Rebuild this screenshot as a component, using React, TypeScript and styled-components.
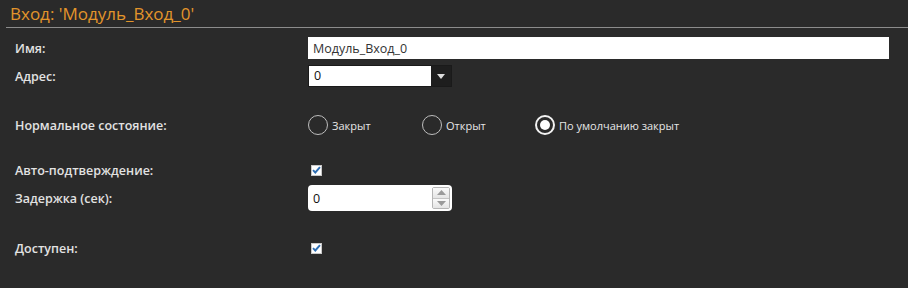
import React, { useState } from 'react';
import styled, { createGlobalStyle } from 'styled-components';

const GlobalStyle = createGlobalStyle`
  html, body {
    margin: 0;
    padding: 0;
    background: #2a2a2a;
  }
`;

const App: React.FC = () => {
  const [state, setState] = useState('default');
  const [autoAck, setAutoAck] = useState(true);
  const [enabled, setEnabled] = useState(true);

  return (
    <Page>
      <GlobalStyle />
      <Header>
        <Title>Вход: 'Модуль_Вход_0'</Title>
      </Header>
      <Form>
        <Row>
          <Label>Имя:</Label>
          <TextInput defaultValue="Модуль_Вход_0" />
        </Row>
        <Row>
          <Label>Адрес:</Label>
          <Select>
            <SelectValue>0</SelectValue>
            <SelectArrow>
              <svg width="8" height="5" viewBox="0 0 8 5">
                <path d="M0 0h8L4 5z" fill="#ddd" />
              </svg>
            </SelectArrow>
          </Select>
        </Row>
        <Row $gap={21}>
          <Label>Нормальное состояние:</Label>
          <RadioGroup>
            <RadioOption $width={114} onClick={() => setState('closed')}>
              <Radio $checked={state === 'closed'} />
              Закрыт
            </RadioOption>
            <RadioOption $width={113} onClick={() => setState('open')}>
              <Radio $checked={state === 'open'} />
              Открыт
            </RadioOption>
            <RadioOption onClick={() => setState('default')}>
              <Radio $checked={state === 'default'} />
              По умолчанию закрыт
            </RadioOption>
          </RadioGroup>
        </Row>
        <Row $gap={17}>
          <Label>Авто-подтверждение:</Label>
          <Check $checked={autoAck} onClick={() => setAutoAck(!autoAck)}>
            {autoAck && <CheckMark />}
          </Check>
        </Row>
        <Row>
          <Label>Задержка (сек):</Label>
          <NumberBox>
            <NumberValue>0</NumberValue>
            <Spinner>
              <SpinButton>
                <svg width="9" height="5" viewBox="0 0 9 5">
                  <path d="M4.5 0L9 5H0z" fill="#9a9a9a" />
                </svg>
              </SpinButton>
              <SpinButton>
                <svg width="9" height="5" viewBox="0 0 9 5">
                  <path d="M0 0h9L4.5 5z" fill="#9a9a9a" />
                </svg>
              </SpinButton>
            </Spinner>
          </NumberBox>
        </Row>
        <Row $gap={22}>
          <Label>Доступен:</Label>
          <Check $checked={enabled} onClick={() => setEnabled(!enabled)}>
            {enabled && <CheckMark />}
          </Check>
        </Row>
      </Form>
    </Page>
  );
};

const CheckMark = () => (
  <svg width="9" height="8" viewBox="0 0 9 8">
    <path d="M1 4.2l2.3 2.3L8 1.2" fill="none" stroke="#2f6fb3" strokeWidth="1.9" />
  </svg>
);

export default App;

const Page = styled.div`
  width: 908px;
  height: 288px;
  background: #2a2a2a;
  font-family: 'Open Sans', 'Noto Sans', sans-serif;
  overflow: hidden;
`;

const Header = styled.div`
  margin-left: 6px;
  padding-left: 4px;
  height: 27px;
  border-bottom: 1px solid #8c8c8c;
  box-sizing: content-box;
`;

const Title = styled.h1`
  margin: 0;
  font-family: 'Open Sans', 'Noto Sans', sans-serif;
  font-weight: 400;
  font-size: 17px;
  line-height: 27px;
  color: #e3952b;
`;

const Form = styled.div`
  padding: 6px 19px 0 15px;
`;

const Row = styled.div<{ $gap?: number }>`
  display: grid;
  grid-template-columns: 293px 1fr;
  align-items: center;
  height: 28px;
  margin-top: ${(p) => p.$gap ?? 0}px;
`;

const Label = styled.div`
  font-size: 12.5px;
  font-weight: 600;
  color: #e2e2e2;
`;

const TextInput = styled.input`
  box-sizing: border-box;
  width: 581px;
  height: 22px;
  border: none;
  background: #fff;
  padding: 0 5px;
  font-family: 'Open Sans', 'Noto Sans', sans-serif;
  font-size: 12.5px;
  color: #333;
  outline: none;
`;

const Select = styled.div`
  box-sizing: border-box;
  width: 144px;
  height: 22px;
  display: flex;
  border: 1px solid #1a1a1a;
  background: #fff;
`;

const SelectValue = styled.div`
  flex: 1;
  padding-left: 5px;
  font-size: 12.5px;
  line-height: 20px;
  color: #111;
`;

const SelectArrow = styled.div`
  width: 20px;
  background: #1e1e1e;
  display: flex;
  align-items: center;
  justify-content: center;
`;

const RadioGroup = styled.div`
  display: flex;
  align-items: center;
`;

const RadioOption = styled.label<{ $width?: number }>`
  display: flex;
  align-items: center;
  gap: 4px;
  width: ${(p) => (p.$width ? `${p.$width}px` : 'auto')};
  font-size: 11px;
  color: #e6e6e6;
  cursor: pointer;
`;

const Radio = styled.span<{ $checked: boolean }>`
  box-sizing: border-box;
  width: 20px;
  height: 20px;
  border-radius: 50%;
  border: ${(p) => (p.$checked ? '2px solid #f2f2f2' : '1px solid #bdbdbd')};
  display: flex;
  align-items: center;
  justify-content: center;

  &::after {
    content: '';
    display: ${(p) => (p.$checked ? 'block' : 'none')};
    width: 10px;
    height: 10px;
    border-radius: 50%;
    background: #fff;
  }
`;

const Check = styled.span<{ $checked: boolean }>`
  box-sizing: border-box;
  width: 11px;
  height: 11px;
  margin-left: 3px;
  background: #fff;
  border: 1px solid #c8c8c8;
  display: flex;
  align-items: center;
  justify-content: center;
  cursor: pointer;
`;

const NumberBox = styled.div`
  box-sizing: border-box;
  width: 144px;
  height: 26px;
  display: flex;
  align-items: center;
  background: #fff;
  border-radius: 4px;
  padding: 2px;
`;

const NumberValue = styled.div`
  flex: 1;
  padding-left: 3px;
  font-size: 12.5px;
  color: #111;
`;

const Spinner = styled.div`
  display: flex;
  flex-direction: column;
  width: 18px;
  height: 22px;
  border: 1px solid #b5b5b5;
  border-radius: 2px;
  box-sizing: border-box;
`;

const SpinButton = styled.div`
  flex: 1;
  display: flex;
  align-items: center;
  justify-content: center;
  background: linear-gradient(#fafafa, #e4e4e4);

  & + & {
    border-top: 1px solid #c4c4c4;
  }
`;
